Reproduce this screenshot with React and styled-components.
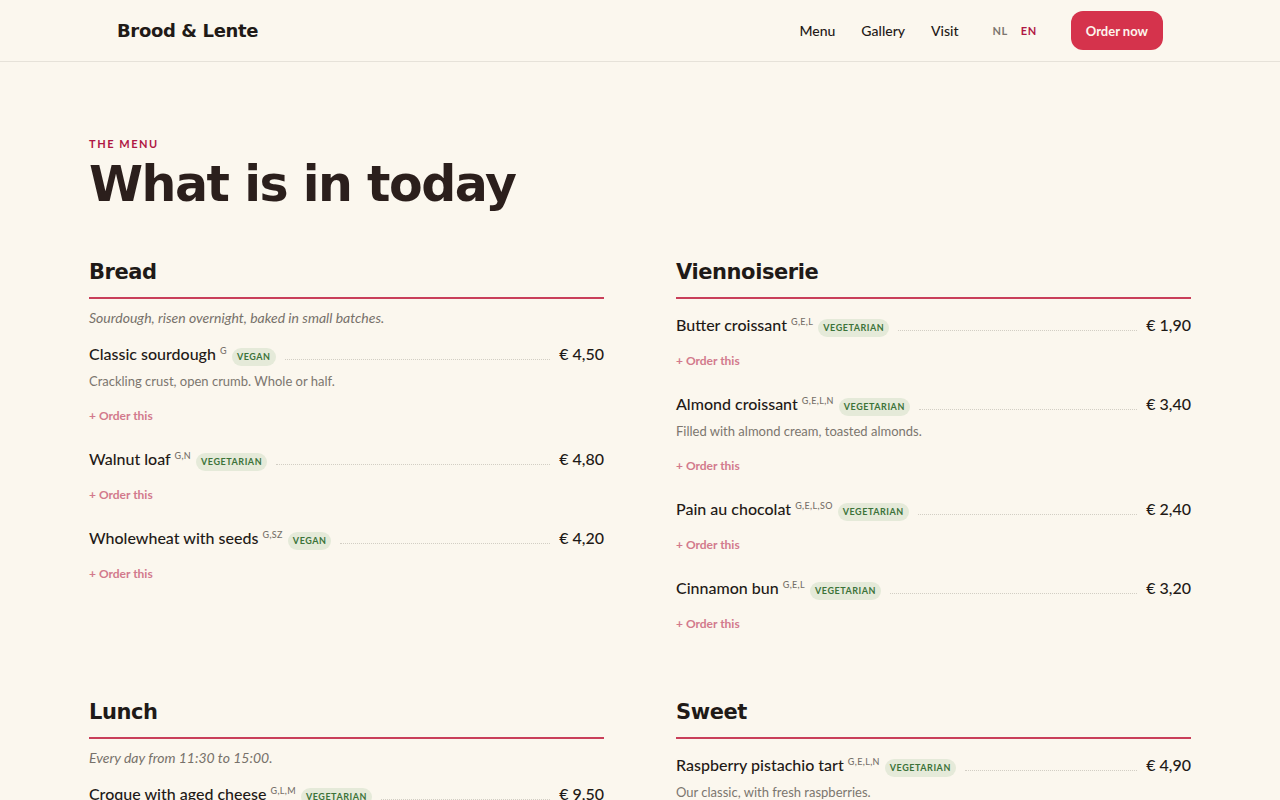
import React from 'react';
import styled, { createGlobalStyle } from 'styled-components';

const sections = [
	{
		title: 'Bread',
		note: 'Sourdough, risen overnight, baked in small batches.',
		items: [
			{ name: 'Classic sourdough', codes: 'G', diet: 'Vegan', price: '4,50', text: 'Crackling crust, open crumb. Whole or half.' },
			{ name: 'Walnut loaf', codes: 'G,N', diet: 'Vegetarian', price: '4,80' },
			{ name: 'Wholewheat with seeds', codes: 'G,SZ', diet: 'Vegan', price: '4,20' },
		],
	},
	{
		title: 'Viennoiserie',
		items: [
			{ name: 'Butter croissant', codes: 'G,E,L', diet: 'Vegetarian', price: '1,90' },
			{ name: 'Almond croissant', codes: 'G,E,L,N', diet: 'Vegetarian', price: '3,40', text: 'Filled with almond cream, toasted almonds.' },
			{ name: 'Pain au chocolat', codes: 'G,E,L,SO', diet: 'Vegetarian', price: '2,40' },
			{ name: 'Cinnamon bun', codes: 'G,E,L', diet: 'Vegetarian', price: '3,20' },
		],
	},
	{
		title: 'Lunch',
		note: 'Every day from 11:30 to 15:00.',
		items: [{ name: 'Croque with aged cheese', codes: 'G,L,M', diet: 'Vegetarian', price: '9,50' }],
	},
	{
		title: 'Sweet',
		items: [
			{ name: 'Raspberry pistachio tart', codes: 'G,E,L,N', diet: 'Vegetarian', price: '4,90', text: 'Our classic, with fresh raspberries.' },
		],
	},
];

function MenuItem({ item }) {
	return (
		<Item>
			<ItemRow>
				<ItemName>
					{item.name} <Codes>{item.codes}</Codes>
					<Badge>{item.diet}</Badge>
				</ItemName>
				<Leader />
				<Price>€ {item.price}</Price>
			</ItemRow>
			{item.text && <ItemText>{item.text}</ItemText>}
			<OrderLink href="#order">+ Order this</OrderLink>
		</Item>
	);
}

export default function App() {
	return (
		<>
			<GlobalStyle />
			<Header>
				<HeaderInner>
					<Logo href="#top">Brood &amp; Lente</Logo>
					<Nav>
						<NavLink href="#menu">Menu</NavLink>
						<NavLink href="#gallery">Gallery</NavLink>
						<NavLink href="#visit">Visit</NavLink>
					</Nav>
					<Languages>
						<LangButton type="button">NL</LangButton>
						<LangButton type="button" $active>
							EN
						</LangButton>
					</Languages>
					<OrderButton type="button">Order now</OrderButton>
				</HeaderInner>
			</Header>
			<Main id="menu">
				<Eyebrow>The menu</Eyebrow>
				<Title>What is in today</Title>
				<Grid>
					{sections.map((section) => (
						<section key={section.title}>
							<SectionTitle>{section.title}</SectionTitle>
							{section.note && <Note>{section.note}</Note>}
							<List>
								{section.items.map((item) => (
									<MenuItem key={item.name} item={item} />
								))}
							</List>
						</section>
					))}
				</Grid>
			</Main>
		</>
	);
}

const GlobalStyle = createGlobalStyle`
	* {
		box-sizing: border-box;
	}

	body {
		margin: 0;
		background: #fbf7ee;
		color: #1f1a17;
		font-family: Lato, 'Open Sans', sans-serif;
		font-size: 16px;
		line-height: 24px;
	}

	a {
		color: inherit;
		text-decoration: none;
	}

	button {
		border: 0;
		padding: 0;
		background: none;
		font-family: inherit;
		cursor: pointer;
	}
`;

const Header = styled.header`
	border-bottom: 1px solid #e6e2d9;
`;

const HeaderInner = styled.div`
	display: flex;
	align-items: center;
	max-width: 1102px;
	margin: 0 auto;
	padding: 11px 28px;
`;

const Logo = styled.a`
	margin-right: auto;
	font-family: 'DejaVu Sans', sans-serif;
	font-size: 18px;
	font-weight: 700;
	letter-spacing: -0.02em;
`;

const Nav = styled.nav`
	display: flex;
	gap: 26px;
`;

const NavLink = styled.a`
	font-size: 14px;
	font-weight: 500;
`;

const Languages = styled.div`
	display: flex;
	gap: 13px;
	margin: 0 34px;
`;

const LangButton = styled.button`
	color: ${(props) => (props.$active ? '#b01744' : '#7c766f')};
	font-size: 11px;
	font-weight: 700;
	letter-spacing: 0.05em;
`;

const OrderButton = styled.button`
	height: 39px;
	padding: 0 15px;
	border-radius: 12px;
	background: #d5334c;
	color: #fdf5ec;
	font-size: 13px;
	font-weight: 700;
`;

const Main = styled.main`
	max-width: 1102px;
	margin: 0 auto;
	padding: 74px 0 80px;
`;

const Eyebrow = styled.p`
	margin: 0;
	color: #b01744;
	font-size: 11px;
	font-weight: 700;
	line-height: 16px;
	letter-spacing: 0.14em;
	text-transform: uppercase;
`;

const Title = styled.h1`
	margin: 8px 0 48px;
	color: #2b1f1c;
	font-family: 'DejaVu Sans', sans-serif;
	font-size: 49px;
	font-weight: 700;
	line-height: 50px;
	letter-spacing: -0.03em;
`;

const Grid = styled.div`
	display: grid;
	grid-template-columns: 1fr 1fr;
	gap: 64px 72px;
`;

const SectionTitle = styled.h2`
	margin: 0;
	padding-bottom: 11px;
	border-bottom: 2px solid #c93f5a;
	font-family: 'DejaVu Sans', sans-serif;
	font-size: 21px;
	font-weight: 700;
	line-height: 28px;
	letter-spacing: -0.02em;
`;

const Note = styled.p`
	margin: 8px 0 0;
	color: #77716a;
	font-size: 14px;
	font-style: italic;
	line-height: 21px;
`;

const List = styled.ul`
	display: grid;
	gap: 21px;
	margin: 14px 0 0;
	padding: 0;
	list-style: none;
`;

const Item = styled.li`
	display: flex;
	flex-direction: column;
	align-items: flex-start;
`;

const ItemRow = styled.div`
	display: flex;
	align-items: baseline;
	gap: 9px;
	width: 100%;
`;

const ItemName = styled.span`
	font-weight: 500;
`;

const Codes = styled.sup`
	color: #77716a;
	font-size: 9px;
	line-height: 0;
	letter-spacing: 0.04em;
`;

const Badge = styled.span`
	display: inline-block;
	margin-left: 5px;
	padding: 0 5px;
	border-radius: 9px;
	background: #e5ead9;
	color: #3c7339;
	font-size: 9px;
	font-weight: 700;
	line-height: 18px;
	letter-spacing: 0.06em;
	text-transform: uppercase;
`;

const Leader = styled.span`
	flex: 1;
	border-bottom: 1px dotted #d2cec4;
`;

const Price = styled.span`
	font-weight: 500;
`;

const ItemText = styled.p`
	margin: 5px 0 0;
	color: #7c766f;
	font-size: 13px;
	line-height: 21px;
`;

const OrderLink = styled.a`
	margin-top: 14px;
	color: #d27a8c;
	font-size: 12px;
	font-weight: 700;
	line-height: 20px;
`;
